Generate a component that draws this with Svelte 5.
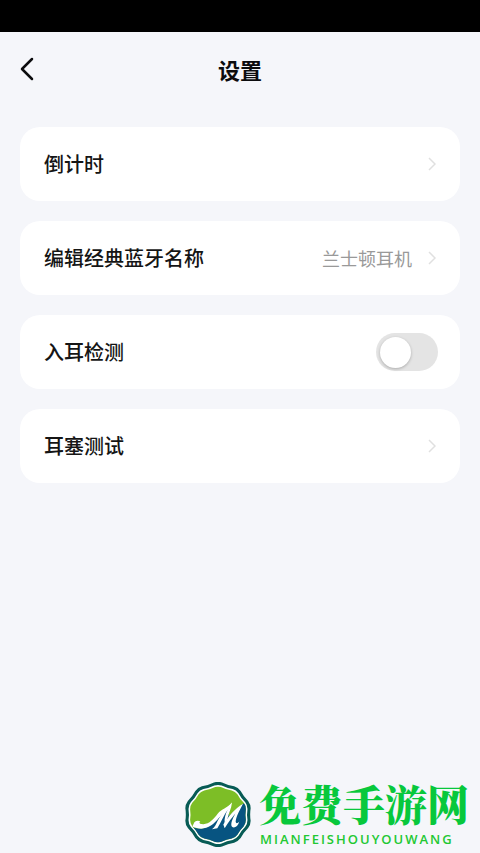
<script>
  let inEar = $state(false);
  const sides = 10;
  const points = Array.from({ length: sides }, (_, i) => {
    const a = ((i * 36 - 90) * Math.PI) / 180;
    return [127 + 100 * Math.cos(a), 122 + 97 * Math.sin(a)];
  });
  // Rounded corners joined by edges that bow slightly inwards
  const badge = (s) => {
    const p = points.map(([x, y]) => [127 + (x - 127) * s, 122 + (y - 122) * s]);
    const mix = (a, b, t) => [a[0] + (b[0] - a[0]) * t, a[1] + (b[1] - a[1]) * t];
    return p.map((c, i) => {
      const prev = p[(i + sides - 1) % sides];
      const next = p[(i + 1) % sides];
      const a = mix(c, prev, 0.2);
      const b = mix(c, next, 0.2);
      const e = mix(next, c, 0.2);
      const m = mix(mix(c, next, 0.5), [127, 122], 0.03);
      return `${i ? '' : `M${a}`}Q${c} ${b}Q${m} ${e}`;
    }).join('') + 'Z';
  };
</script>

{#snippet chevron()}
  <svg class="chevron" viewBox="0 0 8 14" aria-hidden="true"><path d="M1 1l6 6-6 6" /></svg>
{/snippet}

<div class="page">
  <div class="status"></div>
  <header>
    <button class="back" aria-label="返回">
      <svg viewBox="0 0 14 24" aria-hidden="true"><path d="M12 2L2 12l10 10" /></svg>
    </button>
    <h1>设置</h1>
  </header>

  <main>
    <button class="card"><span class="label">倒计时</span>{@render chevron()}</button>
    <button class="card">
      <span class="label">编辑经典蓝牙名称</span>
      <span class="value">兰士顿耳机</span>
      {@render chevron()}
    </button>
    <label class="card">
      <span class="label">入耳检测</span>
      <input type="checkbox" role="switch" bind:checked={inEar} />
    </label>
    <button class="card"><span class="label">耳塞测试</span>{@render chevron()}</button>
  </main>

  <footer>
    <svg class="logo" viewBox="28 25 198 194" aria-hidden="true">
      <defs><clipPath id="inner"><path d={badge(0.88)} /></clipPath></defs>
      <path d={badge(1.03)} fill="#075b55" />
      <path d={badge(0.93)} fill="#fff" />
      <g clip-path="url(#inner)">
        <path d="M20 20h220v200H20z" fill="#7dbe26" />
        <path d="M50 160C85 172 108 156 130 130L166 92L158 128L202 90L240 76V230H40Z" fill="#075481" />
        <g fill="#fff">
          <path d="M54 150C56 141 67 139 74 143C68 147 73 151 82 151C100 152 114 136 126 120C138 104 154 104 169 86C158 110 142 118 130 132C110 158 84 174 50 158Z" />
          <path d="M169 86C167 106 158 120 155 136L147 148C145 134 150 120 156 108C144 126 136 146 125 163L109 166C118 160 121 151 126 141C136 121 151 106 169 86Z" />
          <path d="M202 90C192 110 181 128 180 144C181 150 186 149 191 143C187 158 176 164 169 159C163 151 171 134 179 119C168 133 158 145 147 163L143 152C158 129 177 105 202 90Z" />
        </g>
      </g>
    </svg>
    <div class="brand">
      <strong>免费手游网</strong>
      <span>MIANFEISHOUYOUWANG</span>
    </div>
  </footer>
</div>

<style>
  .page {
    min-height: 100vh;
    display: flex;
    flex-direction: column;
    background: #f5f6fa;
    color: #151515;
    font-family: "Noto Sans CJK SC", sans-serif;
  }
  .status { height: 32px; background: #000; }
  button {
    border: 0;
    padding: 0;
    background: none;
    color: inherit;
    font: inherit;
    text-align: left;
    cursor: pointer;
  }
  svg { display: block; }
  header {
    display: grid;
    grid-template-columns: 1fr auto 1fr;
    align-items: center;
    height: 74px;
    padding: 0 20px;
  }
  h1 { margin: 0; font-size: 22px; line-height: 32px; font-weight: 700; color: #0c0c0e; }
  .back { justify-self: start; }
  .back svg { width: 14px; height: 24px; }
  .back path {
    fill: none;
    stroke: #0c0c0e;
    stroke-width: 2.5;
    stroke-linecap: round;
    stroke-linejoin: round;
  }
  main { display: flex; flex-direction: column; gap: 20px; padding: 21px 20px; }
  .card {
    display: flex;
    align-items: center;
    box-sizing: border-box;
    min-height: 74px;
    padding: 0 24px;
    border-radius: 20px;
    background: #fff;
    cursor: pointer;
  }
  .label { flex: 1; font-size: 20px; line-height: 28px; font-weight: 500; }
  .value { font-size: 18px; line-height: 28px; color: #999; }
  .chevron { width: 8px; height: 14px; margin-left: 16px; }
  .chevron path { fill: none; stroke: #e0e0e0; stroke-width: 1.5; }
  input {
    appearance: none;
    display: flex;
    align-items: center;
    box-sizing: border-box;
    width: 62px;
    height: 38px;
    margin: 0 -2px 0 0;
    padding: 0 4px;
    border-radius: 19px;
    background: #e4e4e4;
    cursor: pointer;
  }
  input::before {
    content: "";
    width: 31px;
    height: 31px;
    border-radius: 50%;
    background: #fff;
    box-shadow: 0 1px 3px rgb(0 0 0 / 25%);
  }
  input:checked { justify-content: flex-end; background: #35c759; }
  footer {
    display: flex;
    justify-content: flex-end;
    align-items: flex-end;
    gap: 8px;
    margin-top: auto;
    padding: 0 11px 6px 0;
  }
  .logo { width: 66px; height: 65px; }
  .brand { display: flex; flex-direction: column; color: #08c83c; }
  .brand strong {
    font-family: "Noto Serif CJK SC", "Noto Sans CJK SC", serif;
    font-size: 42px;
    line-height: 56px;
    font-weight: 900;
  }
  .brand span {
    padding-left: 1px;
    font-family: "Open Sans", sans-serif;
    font-size: 13px;
    line-height: 16px;
    font-weight: 600;
    letter-spacing: 2px;
    color: #22c832;
  }
</style>
